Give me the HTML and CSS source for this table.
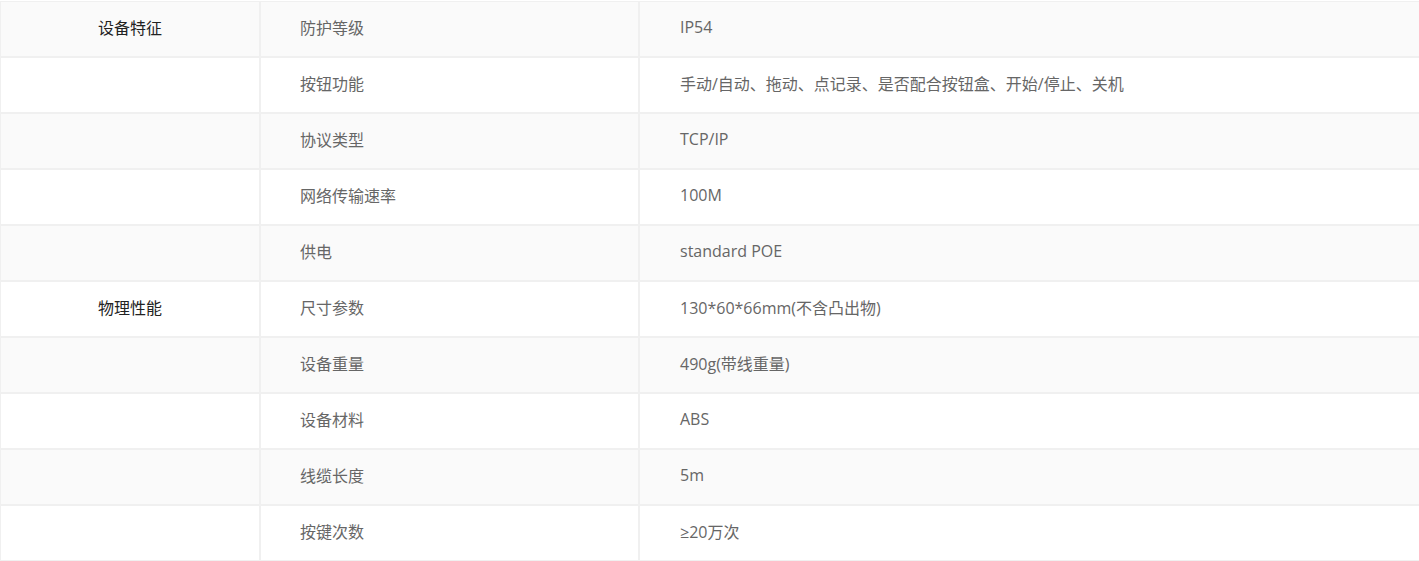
FILE: index.html
```html
<!DOCTYPE html>
<html lang="zh-CN">
<head>
<meta charset="utf-8">
<title>参数</title>
<link rel="stylesheet" href="styles.css">
</head>
<body>
<table class="spec">
  <colgroup><col class="c1"><col class="c2"><col class="c3"></colgroup>
  <tbody>
    <tr><td class="group">设备特征</td><td class="name">防护等级</td><td class="val">IP54</td></tr>
    <tr><td class="group"></td><td class="name">按钮功能</td><td class="val">手动/自动、拖动、点记录、是否配合按钮盒、开始/停止、关机</td></tr>
    <tr><td class="group"></td><td class="name">协议类型</td><td class="val">TCP/IP</td></tr>
    <tr><td class="group"></td><td class="name">网络传输速率</td><td class="val">100M</td></tr>
    <tr><td class="group"></td><td class="name">供电</td><td class="val">standard POE</td></tr>
    <tr><td class="group">物理性能</td><td class="name">尺寸参数</td><td class="val">130*60*66mm(不含凸出物)</td></tr>
    <tr><td class="group"></td><td class="name">设备重量</td><td class="val">490g(带线重量)</td></tr>
    <tr><td class="group"></td><td class="name">设备材料</td><td class="val">ABS</td></tr>
    <tr><td class="group"></td><td class="name">线缆长度</td><td class="val">5m</td></tr>
    <tr><td class="group"></td><td class="name">按键次数</td><td class="val">≥20万次</td></tr>
  </tbody>
</table>
</body>
</html>
```
FILE: styles.css
```css
html, body {
  margin: 0;
  padding: 0;
  background: #fff;
}
body {
  padding-top: 1px;
  font-family: "Open Sans", "Noto Sans CJK SC", sans-serif;
  font-size: 16px;
}
.spec {
  width: 1421px;
  border-collapse: separate;
  border-spacing: 0;
  table-layout: fixed;
}
.c1 { width: 260px; }
.c2 { width: 379px; }
.c3 { width: 782px; }
.spec td {
  height: 50px;
  padding: 0 0 4px 0;
  border: 1px solid #f0f0f0;
  vertical-align: middle;
  color: #666;
  white-space: nowrap;
}
.spec tr:nth-child(odd) td {
  background: #fafafa;
}
.spec td.group {
  text-align: center;
  color: #222;
  font-family: "Noto Sans CJK SC", sans-serif;
}
.spec td.name {
  padding-left: 39px;
  font-family: "Noto Sans CJK SC", sans-serif;
}
.spec td.val {
  padding-left: 40px;
}
```
